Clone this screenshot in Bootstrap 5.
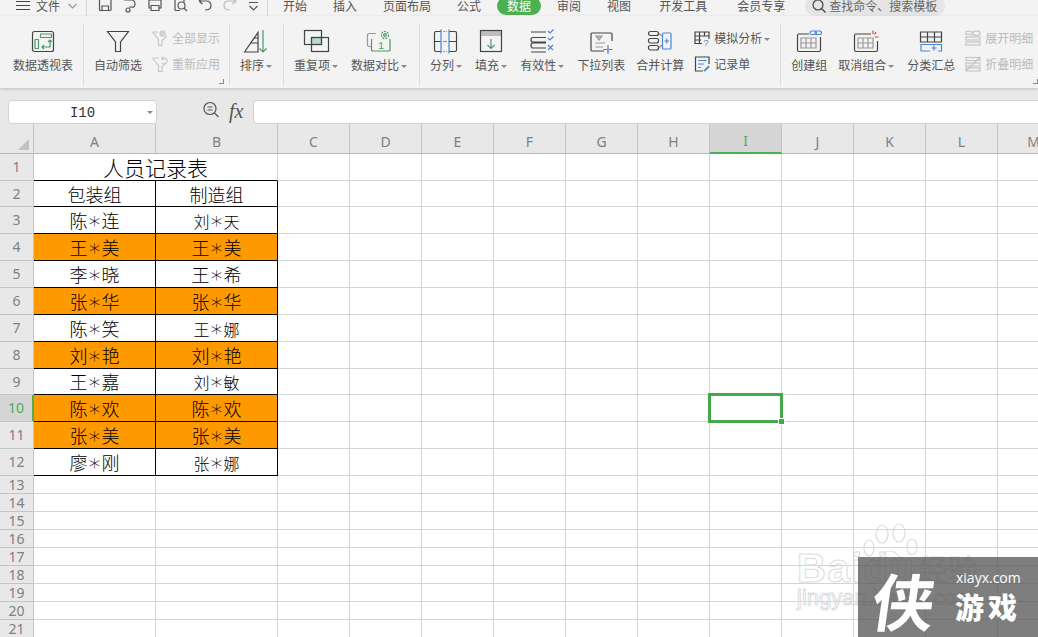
<!DOCTYPE html>
<html lang="zh-CN">
<head>
<meta charset="UTF-8">
<meta name="viewport" content="width=device-width, initial-scale=1.0">
<title>人员记录表</title>
<link href="https://cdn.jsdelivr.net/npm/bootstrap@5.3.0/dist/css/bootstrap.min.css" rel="stylesheet">
<style>
html, body { height: 637px; overflow: hidden; }
body { font-family: "Noto Sans CJK SC", "Noto Sans", sans-serif; font-size: 12px; color: #555; background: #fff; }
svg { display: block; flex: none; fill: none; stroke-width: 1.2; }

/* top tab strip, cut off by the window */
.tabbar { height: 16px; background: #f3f3f3; overflow: hidden; padding-left: 16px; align-items: flex-start; }
.tabbar-inner { margin-top: -4px; height: 20px; align-items: center; }
.tabbar .nav-link { padding: 0 13px; color: #555; font-size: 12px; line-height: 18px; }
.tabbar .nav-link.active-tab { background: #4caf50; color: #fff; border-radius: 10px; padding: 0 10px; margin: 0 3px; }
.qa-ic { margin-left: 9px; stroke: #555; }
.qa-off { stroke: #bbb; }
.tb-sep { width: 1px; height: 20px; background: #d6d6d6; }
.ml-6 { margin-left: 6px; }
.ml-8 { margin-left: 8px; }
.ml-9 { margin-left: 9px; }
.ml-10 { margin-left: 10px; }
.ml-tab2 { margin-left: 2px; }
.ml-tab4 { margin-left: 4px; }
.finder { width: 140px; height: 20px; margin-left: 7px; background: #e5e5e5; border-radius: 10px; padding-left: 7px; color: #666; line-height: 18px; gap: 3px; }

/* ribbon */
.ribbon { height: 72px; background: #f3f3f3; padding: 12px 0 0 13px; gap: 10px; position: relative; box-shadow: 0 1px 3px rgba(0,0,0,.18); z-index: 2; }
.rb-sep { width: 1px; height: 62px; margin-top: -4px; background: #dedede; }
.rb-tool { line-height: 14px; white-space: nowrap; }
.rb-tool svg { margin-bottom: 4px; }
.caret-dn { display: inline-block; width: 0; height: 0; margin-left: 2px; vertical-align: 2px; border-left: 3px solid transparent; border-right: 3px solid transparent; border-top: 3px solid #888; }
.rb-stack { gap: 6px; white-space: nowrap; }
.rb-row { height: 20px; gap: 4px; align-items: center; }
.rb-off { color: #bbb; }
.push3 { margin-left: 3px; }
.push2 { margin-left: 2px; }
.push1 { margin-left: 1px; }
.pull1 { margin-left: -1px; }
.corner-mark { position: absolute; top: 63px; width: 5px; height: 5px; border-right: 1px solid #888; border-bottom: 1px solid #888; }
.c1 { left: 219px; }
.c2 { left: 1033px; }
.gr { stroke: #4a9a6a; }
.bl { stroke: #4a86d8; }
.dk { stroke: #444; }
.lg { stroke: #999; }
.dis { stroke: #c6c6c6; }

/* formula bar */
.fbar { height: 36px; background: #e8e8e8; padding: 12px 0 0 8px; }
.namebox { width: 149px; height: 24px; padding: 0; background: #fff; border: 1px solid #d2d2d2; border-radius: 4px; position: relative; font-family: "Liberation Mono", monospace; font-size: 14px; color: #333; line-height: 24px; text-align: center; }
.namebox .caret-dn { position: absolute; right: 3px; top: 10px; }
.zoom-ic { margin-left: 45px; }
.fx-txt { font-family: "Liberation Serif", serif; font-style: italic; font-size: 20px; color: #555; line-height: 22px; margin-left: 9px; width: 24px; }
.fbox { flex: 1; height: 24px; margin-right: -6px; background: #fff; border: 1px solid #d2d2d2; border-radius: 4px; }

/* sheet */
.sheet-wrap { position: relative; flex: 1; overflow: hidden; background: #fff; }
.sheet { border-collapse: separate; border-spacing: 0; table-layout: fixed; width: 1070px; }
.sheet th, .sheet td { padding: 0; text-align: center; vertical-align: middle; border-right: 1px solid #d4d4d4; border-bottom: 1px solid #d4d4d4; overflow: visible; white-space: nowrap; }
.sheet th { background: #e8e8e8; color: #808080; font-family: "Noto Sans", sans-serif; font-weight: 400; font-size: 14px; line-height: 1; border-color: #c4c4c4; }
.sheet thead th { height: 30px; padding-top: 6px; border-bottom-color: #b8b8b8; }
.sheet .corner { position: relative; }
.corner-tri { position: absolute; right: 4px; bottom: 3px; width: 0; height: 0; border-left: 11px solid transparent; border-bottom: 11px solid #c2c2c2; }
.sheet .col-on { background: #d5d5d5; color: #4caf50; border-bottom: 2px solid #4caf50; }
.sheet .row-on { background: #d5d5d5; color: #4caf50; border-right: 2px solid #4caf50; }
.rh-a { height: 27px; }
.rh-b { height: 26px; }
.rh-c { height: 18px; }
.sheet td { color: #000; line-height: 1; font-weight: 300; }
.sheet .cell-title { font-size: 21px; }
.sheet .cell-18 { font-size: 18px; }
.sheet .cell-16 { font-size: 16px; }
.sheet .edge-b { border-bottom-color: #000; }
.sheet .edge-r { border-right-color: #000; }
.sheet .fill-or { background: #ff9900; }
.aster { display: inline-block; width: 14px; font-family: "DejaVu Sans", sans-serif; font-size: 23px; line-height: 1; transform: translateY(5px); }
.sel-cell { position: relative; }
.sel-box { position: absolute; left: -2px; top: -2px; right: -2px; bottom: -2px; border: 3px solid #43a847; }
.sel-box::after { content: ""; position: absolute; right: -5px; bottom: -5px; width: 7px; height: 7px; background: #43a847; border: 1px solid #fff; }

/* watermarks */
.wm-baidu { position: absolute; left: 795px; top: 394px; width: 200px; height: 100px; color: transparent; -webkit-text-stroke: 1px #dcdcdc; font-family: "Liberation Sans", sans-serif; white-space: nowrap; }
.wm-name { position: absolute; left: 2px; top: 30px; font-size: 40px; font-weight: 700; line-height: 1; letter-spacing: 1.5px; }
.wm-cn { position: absolute; left: 123px; top: 35px; font-family: "Noto Sans CJK SC", sans-serif; font-size: 30px; line-height: 1; }
.wm-url { position: absolute; left: 2px; top: 69px; font-size: 22px; line-height: 1; }
.wm-paw { position: absolute; left: 65px; top: 5px; }
.wm-box { position: absolute; left: 858px; top: 433px; width: 180px; height: 80px; background: rgba(85,85,85,.76); color: #fff; }
.wm-glyph { position: absolute; left: 15px; top: 11px; font-size: 62px; font-weight: 700; line-height: 1; transform: skewX(-8deg); }
.wm-site { position: absolute; left: 98px; top: 13px; font-family: "Open Sans", sans-serif; font-size: 14px; line-height: 1.2; }
.wm-game { position: absolute; left: 97px; top: 35px; font-size: 29px; font-weight: 900; line-height: 1; letter-spacing: 4px; }
</style>
</head>
<body class="d-flex flex-column">

<!-- tab strip -->
<div class="tabbar d-flex">
  <div class="tabbar-inner d-flex">
    <svg width="14" height="20" viewBox="0 0 14 20" class="dk"><path d="M0 5.500H14M0 9.500H14M0 13.500H14"/></svg>
    <span class="ml-6">文件</span>
    <svg class="ml-8" width="9" height="20" viewBox="0 0 9 20" stroke="#999"><path d="M.5 8L4.500 12L8.500 8"/></svg>
    <div class="tb-sep ml-9"></div>
    <svg class="qa-ic ml-10" width="16" height="20" viewBox="0 0 16 20"><path d="M2.500 1H11L14 4V13.500Q14 14.500 13 14.500H3.500Q2.500 14.500 2.500 13.500ZM5 14V10H11.500V14"/></svg>
    <svg class="qa-ic" width="16" height="20" viewBox="0 0 16 20"><path d="M2 4H9Q13 4 13 8T9 11H7M9.500 1L12 4M4 14A2 2 0 1 0 8 14A2 2 0 1 0 4 14"/></svg>
    <svg class="qa-ic" width="16" height="20" viewBox="0 0 16 20"><path d="M4 4V1H12V4M2 4H14V12H12M4 12H2V4M4 9.500H12V14.500H4Z"/></svg>
    <svg class="qa-ic" width="16" height="20" viewBox="0 0 16 20"><path d="M3 14.500V1H12V6M3 14.500H8"/><circle cx="9.500" cy="9.500" r="3.500"/><path d="M12 12L15 15"/></svg>
    <svg class="qa-ic" width="16" height="20" viewBox="0 0 16 20"><path d="M2 5L5.500 2M2 5L5.500 8M2 5H9Q14 5 14 9.500T8 14"/></svg>
    <svg class="qa-ic qa-off" width="16" height="20" viewBox="0 0 16 20"><path d="M14 5L10.500 2M14 5L10.500 8M14 5H7Q2 5 2 9.500T8 14"/></svg>
    <svg class="qa-ic ml-10" width="11" height="20" viewBox="0 0 11 20"><path d="M1 6.500H10M1.500 10L5.500 14L9.500 10"/></svg>
    <div class="tb-sep ml-8"></div>
    <ul class="nav flex-nowrap ml-tab2">
      <li class="nav-item"><a class="nav-link">开始</a></li>
      <li class="nav-item"><a class="nav-link">插入</a></li>
      <li class="nav-item"><a class="nav-link">页面布局</a></li>
      <li class="nav-item"><a class="nav-link">公式</a></li>
      <li class="nav-item"><a class="nav-link active-tab">数据</a></li>
      <li class="nav-item"><a class="nav-link">审阅</a></li>
      <li class="nav-item"><a class="nav-link">视图</a></li>
      <li class="nav-item ml-tab2"><a class="nav-link">开发工具</a></li>
      <li class="nav-item ml-tab4"><a class="nav-link">会员专享</a></li>
    </ul>
    <div class="finder d-flex align-items-center">
      <svg width="14" height="16" viewBox="0 0 14 16" class="dk"><circle cx="6" cy="7" r="5"/><path d="M9.500 10.500L13.500 14.500"/></svg>
      <span>查找命令、搜索模板</span>
    </div>
  </div>
</div>

<!-- ribbon -->
<div class="ribbon d-flex">
  <div class="rb-tool d-flex flex-column align-items-center">
    <svg width="28" height="26" viewBox="0 0 28 26"><rect class="dk" x="3.500" y="3.500" width="21" height="20" rx="2"/><rect class="gr" x="11.500" y="6" width="11" height="3.500" rx=".5"/><rect class="gr" x="6" y="11.500" width="3.500" height="9" rx=".5"/><path class="gr" d="M13 19H21V12M19 14L21 12L23 14M15 17L13 19L15 21"/></svg>
    <span>数据透视表</span>
  </div>
  <div class="rb-sep"></div>
  <div class="rb-tool d-flex flex-column align-items-center">
    <svg width="28" height="26" viewBox="0 0 28 26"><path class="dk" d="M3.500 3.500H24.500L16.500 14V23.500H11.500V14Z"/></svg>
    <span>自动筛选</span>
  </div>
  <div class="rb-stack d-flex flex-column rb-off">
    <div class="rb-row d-flex">
      <svg width="16" height="16" viewBox="0 0 16 16" class="dis"><path d="M.5 2H6M15 6L10 10.500V15.500H6.500V9.500L.5 2"/><circle cx="10.500" cy="3.500" r="2.500"/><circle cx="10.500" cy="3.500" r=".8"/></svg>
      <span>全部显示</span>
    </div>
    <div class="rb-row d-flex">
      <svg width="16" height="16" viewBox="0 0 16 16" class="dis"><path d="M.5 2H7M14 7L10 10.500V15.500H6.500V9.500L.5 2M10 2.500A3 3 0 1 1 10 7M10 .8V3.500H12.500"/></svg>
      <span>重新应用</span>
    </div>
  </div>
  <i class="corner-mark c1"></i>
  <div class="rb-sep pull1"></div>
  <div class="rb-tool d-flex flex-column align-items-center">
    <svg width="28" height="26" viewBox="0 0 28 26"><path class="dk" d="M2.500 24L16 4.500V24ZM9 15H16M12.500 10H16"/><path class="gr" d="M21 2V24M17.500 20.500L21 24L24.500 20.500"/></svg>
    <span>排序<i class="caret-dn"></i></span>
  </div>
  <div class="rb-sep push1"></div>
  <div class="rb-tool d-flex flex-column align-items-center">
    <svg width="28" height="26" viewBox="0 0 28 26"><rect x="9.500" y="9.500" width="10" height="7" fill="#bcdac8" stroke="#4a9a6a"/><rect class="dk" x="2.500" y="2.500" width="17" height="14"/><rect class="dk" x="9.500" y="9.500" width="17" height="14"/></svg>
    <span>重复项<i class="caret-dn"></i></span>
  </div>
  <div class="rb-tool d-flex flex-column align-items-center push3">
    <svg width="28" height="26" viewBox="0 0 28 26"><path class="lg" d="M11 5.500H4Q2.500 5.500 2.500 7V17Q2.500 18.500 4 18.500H6"/><path class="gr" d="M6.500 11V22Q6.500 23 7.500 23H24Q25 23 25 22V11"/><circle class="gr" cx="20" cy="7" r="3.500" stroke-dasharray="2 1"/><circle class="gr" cx="20" cy="7" r="1.300"/><text x="13" y="21" font-size="10" fill="#4a9a6a" stroke="none" font-family="Liberation Mono">1</text></svg>
    <span>数据对比<i class="caret-dn"></i></span>
  </div>
  <div class="rb-sep push2"></div>
  <div class="rb-tool d-flex flex-column align-items-center">
    <svg width="28" height="26" viewBox="0 0 28 26"><path class="dk" d="M9 3.500H4Q2.500 3.500 2.500 5V22Q2.500 23.500 4 23.500H9M17 3.500H23Q24.500 3.500 24.500 5V22Q24.500 23.500 23 23.500H17M2.500 13.500H9M17 13.500H24.500"/><path class="lg" d="M11 13.500H15" /><path class="lg" d="M11 3.500H15M11 23.500H15" stroke-dasharray="2 1"/><path class="bl" d="M9 1.500V25.500M17 1.500V25.500"/></svg>
    <span>分列<i class="caret-dn"></i></span>
  </div>
  <div class="rb-tool d-flex flex-column align-items-center push3">
    <svg width="28" height="26" viewBox="0 0 28 26"><rect x="3.500" y="2.500" width="21" height="5.500" fill="#bdbdbd" stroke="none"/><rect class="dk" x="3.500" y="2.500" width="21" height="21"/><path class="gr" d="M14 11V20.500M10.500 17L14 20.500L17.500 17"/></svg>
    <span>填充<i class="caret-dn"></i></span>
  </div>
  <div class="rb-tool d-flex flex-column align-items-center push3">
    <svg width="28" height="26" viewBox="0 0 28 26"><path class="dk" d="M3 4H18M18 9.500H5Q3 9.500 3 11.800T5 14H18M18 15H5Q3 15 3 17.500T5 20H18M3 24H18"/><path class="bl" d="M20 3L22 5L25.500 1.500M20 10L22 12L25.500 8.500M20 17L25 22M25 17L20 22"/></svg>
    <span>有效性<i class="caret-dn"></i></span>
  </div>
  <div class="rb-tool d-flex flex-column align-items-center push3">
    <svg width="28" height="26" viewBox="0 0 28 26"><path class="dk" d="M25 13V6Q25 5 24 5H5Q4 5 4 6V22Q4 23 5 23H17"/><path d="M9 8H15L12 12Z" fill="#bbb" stroke="#999"/><path class="lg" d="M8.500 15H18M8.500 19H16"/><path class="bl" d="M21 17V26M16.500 21.500H25.500"/></svg>
    <span>下拉列表</span>
  </div>
  <div class="rb-tool d-flex flex-column align-items-center push1">
    <svg width="28" height="26" viewBox="0 0 28 26"><rect class="dk" x="2.500" y="3.500" width="10" height="4" rx="2"/><rect class="dk" x="2.500" y="10.500" width="10" height="4.500" rx="2"/><rect class="dk" x="2.500" y="17.500" width="10" height="4.500" rx="2"/><path class="lg" d="M13 5.500L16 8M13 20L16 17"/><rect class="bl" x="16.500" y="5" width="8.500" height="16" rx="1"/><path class="bl" d="M20.750 10.500V15.500M18.300 13H23.200"/></svg>
    <span>合并计算</span>
  </div>
  <div class="rb-stack d-flex flex-column">
    <div class="rb-row d-flex">
      <svg width="16" height="16" viewBox="0 0 16 16"><path class="dk" d="M8 13.500H1V2H15V9M1 6H15M1 10H7M5.500 2V13.500M10.500 2V6"/><text x="9.500" y="15.500" font-size="9" fill="#4a86d8" stroke="none" font-family="Liberation Sans">?</text></svg>
      <span>模拟分析<i class="caret-dn"></i></span>
    </div>
    <div class="rb-row d-flex">
      <svg width="16" height="16" viewBox="0 0 16 16"><path class="dk" d="M9 15H1.500V1H15V8"/><path class="bl" d="M4 4.500H12.500M4 8H10M4 11.500H7"/><path d="M9.500 14.500L14.500 9.500L15.800 10.800L10.800 15.800Z" fill="#4a86d8" stroke="none"/></svg>
      <span>记录单</span>
    </div>
  </div>
  <div class="rb-sep"></div>
  <div class="rb-tool d-flex flex-column align-items-center">
    <svg width="28" height="26" viewBox="0 0 28 26"><path class="dk" d="M14 6H4Q2.500 6 2.500 7.500V22Q2.500 23.500 4 23.500H24Q25.500 23.500 25.500 22V9"/><path class="lg" d="M6 10H21V20H6ZM6 15H21M11 10V20M16 10V20"/><rect class="bl" x="15" y="3" width="6.500" height="3.500" rx="1.700"/><rect class="bl" x="20" y="3" width="6.500" height="3.500" rx="1.700"/></svg>
    <span>创建组</span>
  </div>
  <div class="rb-tool d-flex flex-column align-items-center push1">
    <svg width="28" height="26" viewBox="0 0 28 26"><path class="dk" d="M19 6H4Q2.500 6 2.500 7.500V22Q2.500 23.500 4 23.500H24Q25.500 23.500 25.500 22V13"/><path class="lg" d="M6 10H21V20H6ZM6 15H21M11 10V20M16 10V20"/><path d="M21 2.500V6M24 4L22.500 6.500M23 9H26.500" stroke="#e04040"/></svg>
    <span>取消组合<i class="caret-dn"></i></span>
  </div>
  <div class="rb-tool d-flex flex-column align-items-center push3">
    <svg width="28" height="26" viewBox="0 0 28 26"><path class="dk" d="M3.500 4H24.500V14H3.500ZM3.500 9H24.500M10.500 4V14M17.500 4V14"/><path class="bl" d="M13 23H4V16.500H24.500V23H21M17 17.500V22.500M14.500 20H19.500"/></svg>
    <span>分类汇总</span>
  </div>
  <div class="rb-stack d-flex flex-column rb-off">
    <div class="rb-row d-flex">
      <svg width="16" height="16" viewBox="0 0 16 16" class="dis"><rect x="1" y="1.500" width="6" height="3"/><rect x="1" y="7" width="14" height="3"/><rect x="1" y="12" width="14" height="3"/><ellipse cx="11.500" cy="3.200" rx="3.500" ry="2.300"/></svg>
      <span>展开明细</span>
    </div>
    <div class="rb-row d-flex">
      <svg width="16" height="16" viewBox="0 0 16 16" class="dis"><rect x="1" y="1.500" width="14" height="3"/><rect x="1" y="7" width="14" height="3"/><rect x="1" y="12" width="14" height="3"/><path d="M1 15L15 1"/></svg>
      <span>折叠明细</span>
    </div>
  </div>
  <i class="corner-mark c2"></i>
</div>

<!-- formula bar -->
<div class="fbar d-flex">
  <div class="namebox">I10<i class="caret-dn"></i></div>
  <svg class="zoom-ic" width="18" height="20" viewBox="0 0 18 20" stroke="#555"><circle cx="8" cy="8.500" r="6"/><path d="M12.500 13L16.500 17M5.500 7H10.500M5.500 10H10.500"/></svg>
  <span class="fx-txt">fx</span>
  <div class="fbox"></div>
</div>

<!-- sheet -->
<div class="sheet-wrap">
  <table class="sheet">
    <colgroup id="sheetCols"></colgroup>
    <thead><tr id="sheetHead"></tr></thead>
    <tbody id="sheetBody"></tbody>
  </table>

  <div class="wm-baidu">
    <svg class="wm-paw" width="62" height="50" viewBox="0 0 62 50" stroke="#dcdcdc"><ellipse cx="9" cy="25" rx="5" ry="8"/><ellipse cx="22" cy="11" rx="6" ry="9"/><ellipse cx="39" cy="10" rx="6" ry="9"/><ellipse cx="52" cy="24" rx="5" ry="8"/><path d="M18 38Q30 18 43 38"/></svg>
    <span class="wm-name">Baidu</span>
    <span class="wm-cn">经验</span>
    <span class="wm-url">jingyan.baidu.com</span>
  </div>
  <div class="wm-box">
    <span class="wm-glyph">侠</span>
    <span class="wm-site">xiayx.com</span>
    <span class="wm-game">游戏</span>
  </div>
</div>

<script>
  // Sheet data
  const letters = ['A','B','C','D','E','F','G','H','I','J','K','L','M','N'];
  const people = [
    ['陈*连','刘*天',18,16,false],
    ['王*美','王*美',18,18,true],
    ['李*晓','王*希',18,18,false],
    ['张*华','张*华',18,18,true],
    ['陈*笑','王*娜',18,16,false],
    ['刘*艳','刘*艳',18,18,true],
    ['王*嘉','刘*敏',18,16,false],
    ['陈*欢','陈*欢',18,18,true],
    ['张*美','张*美',18,18,true],
    ['廖*刚','张*娜',18,16,false]
  ];
  const rowClass = ['rh-a','rh-b','rh-a','rh-a','rh-a','rh-a','rh-a','rh-a','rh-b','rh-a','rh-a','rh-a'];

  // Column widths
  const widths = [34,122,122].concat(letters.slice(2).map(() => 72));
  document.getElementById('sheetCols').innerHTML = widths.map(w => `<col width="${w}">`).join('');

  // Header row
  let head = '<th class="corner"><i class="corner-tri"></i></th>';
  letters.forEach(l => { head += `<th class="${l === 'I' ? 'col-on' : ''}">${l}</th>`; });
  document.getElementById('sheetHead').innerHTML = head;

  const nameHtml = s => s.replace('*', '<span class="aster">*</span>');

  // Body rows
  let body = '';
  for (let r = 1; r <= 21; r++) {
    const h = r <= 12 ? rowClass[r - 1] : 'rh-c';
    let cells = `<th class="${r === 10 ? 'row-on' : ''}">${r}</th>`;
    if (r === 1) {
      cells += '<td colspan="2" class="cell-title edge-b">人员记录表</td>';
    } else if (r === 2) {
      cells += '<td class="cell-18 edge-b edge-r">包装组</td><td class="cell-18 edge-b edge-r">制造组</td>';
    } else if (r <= 12) {
      const p = people[r - 3];
      const fill = p[4] ? ' fill-or' : '';
      cells += `<td class="cell-${p[2]} edge-b edge-r${fill}">${nameHtml(p[0])}</td>`;
      cells += `<td class="cell-${p[3]} edge-b edge-r${fill}">${nameHtml(p[1])}</td>`;
    } else {
      cells += '<td></td><td></td>';
    }
    letters.slice(2).forEach(l => {
      if (r === 10 && l === 'I') cells += '<td class="sel-cell"><div class="sel-box"></div></td>';
      else cells += '<td></td>';
    });
    body += `<tr class="${h}">${cells}</tr>`;
  }
  document.getElementById('sheetBody').innerHTML = body;
</script>
<script src="https://cdn.jsdelivr.net/npm/bootstrap@5.3.0/dist/js/bootstrap.bundle.min.js"></script>
</body>
</html>
